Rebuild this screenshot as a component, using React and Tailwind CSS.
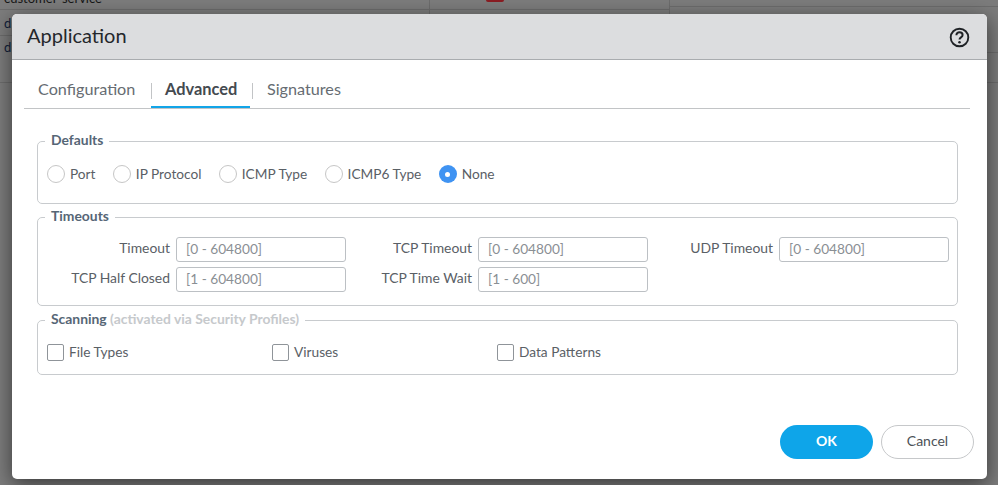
const inputClass = "w-[170px] h-[25px] shrink-0 rounded-[3px] border border-[#bcc0c4] bg-white px-[9px] pb-[2px] text-[13.7px] text-[#4a5056] outline-none placeholder:text-[#8a8f94] [font-family:Lato,sans-serif]";
const labelClass = "pb-[2px] text-[13.9px] text-[#5a6066] text-right";

function Radio({ label, checked }) {
  return (
    <label className="flex items-center">
      {checked ? (
        <span className="flex h-[18px] w-[18px] items-center justify-center rounded-full bg-[#3f93f2]">
          <span className="h-[5px] w-[5px] rounded-full bg-white" />
        </span>
      ) : (
        <span className="h-[18px] w-[18px] rounded-full border-[1.5px] border-[#c6c6c6] bg-white" />
      )}
      <span className="ml-[5px] text-[13.7px] text-[#5a6066]">{label}</span>
    </label>
  );
}

function Check({ label, width }) {
  return (
    <label className={`flex items-center ${width}`}>
      <span className="h-[17px] w-[17px] rounded-[2px] border border-[#8f9499] bg-white" />
      <span className="ml-[5px] text-[13.7px] text-[#5a6066]">{label}</span>
    </label>
  );
}

function Field({ label, labelWidth, placeholder }) {
  return (
    <div className="flex items-center gap-[6px]">
      <span className={`${labelWidth} ${labelClass}`}>{label}</span>
      <input className={inputClass} placeholder={placeholder} />
    </div>
  );
}

function Group({ legend, children, className }) {
  return (
    <fieldset className={`rounded-[5px] border border-[#c8cbce] ${className}`}>
      <legend className="ml-[7px] px-[6px] pb-[4px] text-[13.9px] leading-[17px] font-bold text-[#566676]">{legend}</legend>
      {children}
    </fieldset>
  );
}

export default function App() {
  return (
    <div className="relative h-[485px] w-[998px] overflow-hidden bg-[#7c7c7c] [font-family:Lato,sans-serif]">
      <div className="flex">
        <div className="w-[430px] border-r border-[#6c6c6c] text-[13px] text-[#10213a]">
          <div className="h-[10px] overflow-hidden border-b border-[#6c6c6c]">
            <div className="-mt-[10px] pl-[4px] leading-[16px] text-[#161616]">customer-service</div>
          </div>
          <div className="h-[26px] border-b border-[#6c6c6c] pt-[5px] pl-[4px] leading-[16px]">d</div>
          <div className="h-[47px] border-b border-[#6c6c6c] pt-[3px] pl-[4px] leading-[16px]">d</div>
        </div>
        <div className="h-[14px] w-[240px] border-r border-[#6c6c6c]">
          <div className="h-[10px] border-b border-[#6c6c6c] pl-[56px]">
            <div className="h-[2px] w-[18px] rounded-b-[2px] bg-[#8a1c22]" />
          </div>
        </div>
        <div className="flex-1">
          <div className="h-[7px] border-b border-[#6c6c6c]" />
          <div className="h-[46px] border-b border-[#6c6c6c]" />
          <div className="h-[30px] border-b border-[#6c6c6c]" />
        </div>
      </div>

      <div className="absolute top-[14px] left-[12px] flex h-[465px] w-[975px] flex-col rounded-[5px] bg-white shadow-[0_5px_20px_rgba(0,0,0,0.55)]">
        <header className="flex h-[46px] shrink-0 items-center justify-between rounded-t-[5px] border-b border-[#a9acaf] bg-[#dcdddf] pr-[17px] pl-[15px]">
          <h1 className="pb-[3px] text-[20px] font-normal text-[#24272b]">Application</h1>
          <svg className="mt-[1px]" width="21" height="21" viewBox="0 0 21 21" fill="none" aria-label="Help">
            <circle cx="10.5" cy="10.5" r="8.8" stroke="#1f2226" strokeWidth="1.9" />
            <path d="M7.4 8.3c0-1.9 1.4-3 3.1-3s3.1 1.1 3.1 2.7c0 2.4-3.1 2.3-3.1 4.5" stroke="#1f2226" strokeWidth="2" />
            <circle cx="10.5" cy="15.2" r="1.25" fill="#1f2226" />
          </svg>
        </header>

        <nav className="mt-[16px] mr-[17px] ml-[12px] flex h-[33px] shrink-0 items-start border-b border-[#c2c4c6]">
          <span className="w-[127px] pt-[3px] pl-[14px] text-[16.2px] leading-[20px] text-[#666c72]">Configuration</span>
          <span className="relative h-[32px] w-[99px] border-b-2 border-[#12a5e8] pt-[3px] pl-[14px] text-[16.4px] leading-[20px] font-bold text-[#444a50]">
            <span className="absolute top-[7px] left-0 h-[16px] w-px bg-[#c2c4c6]" />
            Advanced
            <span className="absolute top-[7px] -right-[3px] h-[16px] w-px bg-[#c2c4c6]" />
          </span>
          <span className="pt-[3px] pl-[17px] text-[16.2px] leading-[20px] text-[#666c72]">Signatures</span>
        </nav>

        <main className="mt-[22px] mr-[29px] ml-[25px] flex flex-col gap-[3px]">
          <Group legend="Defaults" className="h-[73px]">
            <div className="mt-[12px] flex items-center gap-[17.3px] pl-[9px]">
              <Radio label="Port" />
              <Radio label="IP Protocol" />
              <Radio label="ICMP Type" />
              <Radio label="ICMP6 Type" />
              <Radio label="None" checked />
            </div>
          </Group>
          <Group legend="Timeouts" className="h-[99px]">
            <div className="mt-[9px] flex flex-col gap-[5px]">
              <div className="flex">
                <Field label="Timeout" labelWidth="w-[132px]" placeholder="[0 - 604800]" />
                <div className="w-[1px]" />
                <Field label="TCP Timeout" labelWidth="w-[125px]" placeholder="[0 - 604800]" />
                <Field label="UDP Timeout" labelWidth="w-[125px]" placeholder="[0 - 604800]" />
              </div>
              <div className="flex">
                <Field label="TCP Half Closed" labelWidth="w-[132px]" placeholder="[1 - 604800]" />
                <div className="w-[1px]" />
                <Field label="TCP Time Wait" labelWidth="w-[125px]" placeholder="[1 - 600]" />
              </div>
            </div>
          </Group>
          <Group legend={<>Scanning <span className="text-[#c6c9cc]">(activated via Security Profiles)</span></>} className="mt-[1px] h-[65px]">
            <div className="mt-[11px] flex items-center pl-[9px]">
              <Check label="File Types" width="w-[225px]" />
              <Check label="Viruses" width="w-[225px]" />
              <Check label="Data Patterns" />
            </div>
          </Group>
        </main>

        <footer className="mt-auto mr-[13px] mb-[20px] flex justify-end gap-[8px]">
          <button className="h-[34px] w-[93px] rounded-full bg-[#0ea5e9] pb-[3px] text-[14px] font-bold text-white">OK</button>
          <button className="h-[34px] w-[93px] rounded-full border border-[#c6c8ca] bg-white pb-[3px] text-[14px] text-[#4c5157]">Cancel</button>
        </footer>
      </div>
    </div>
  );
}
